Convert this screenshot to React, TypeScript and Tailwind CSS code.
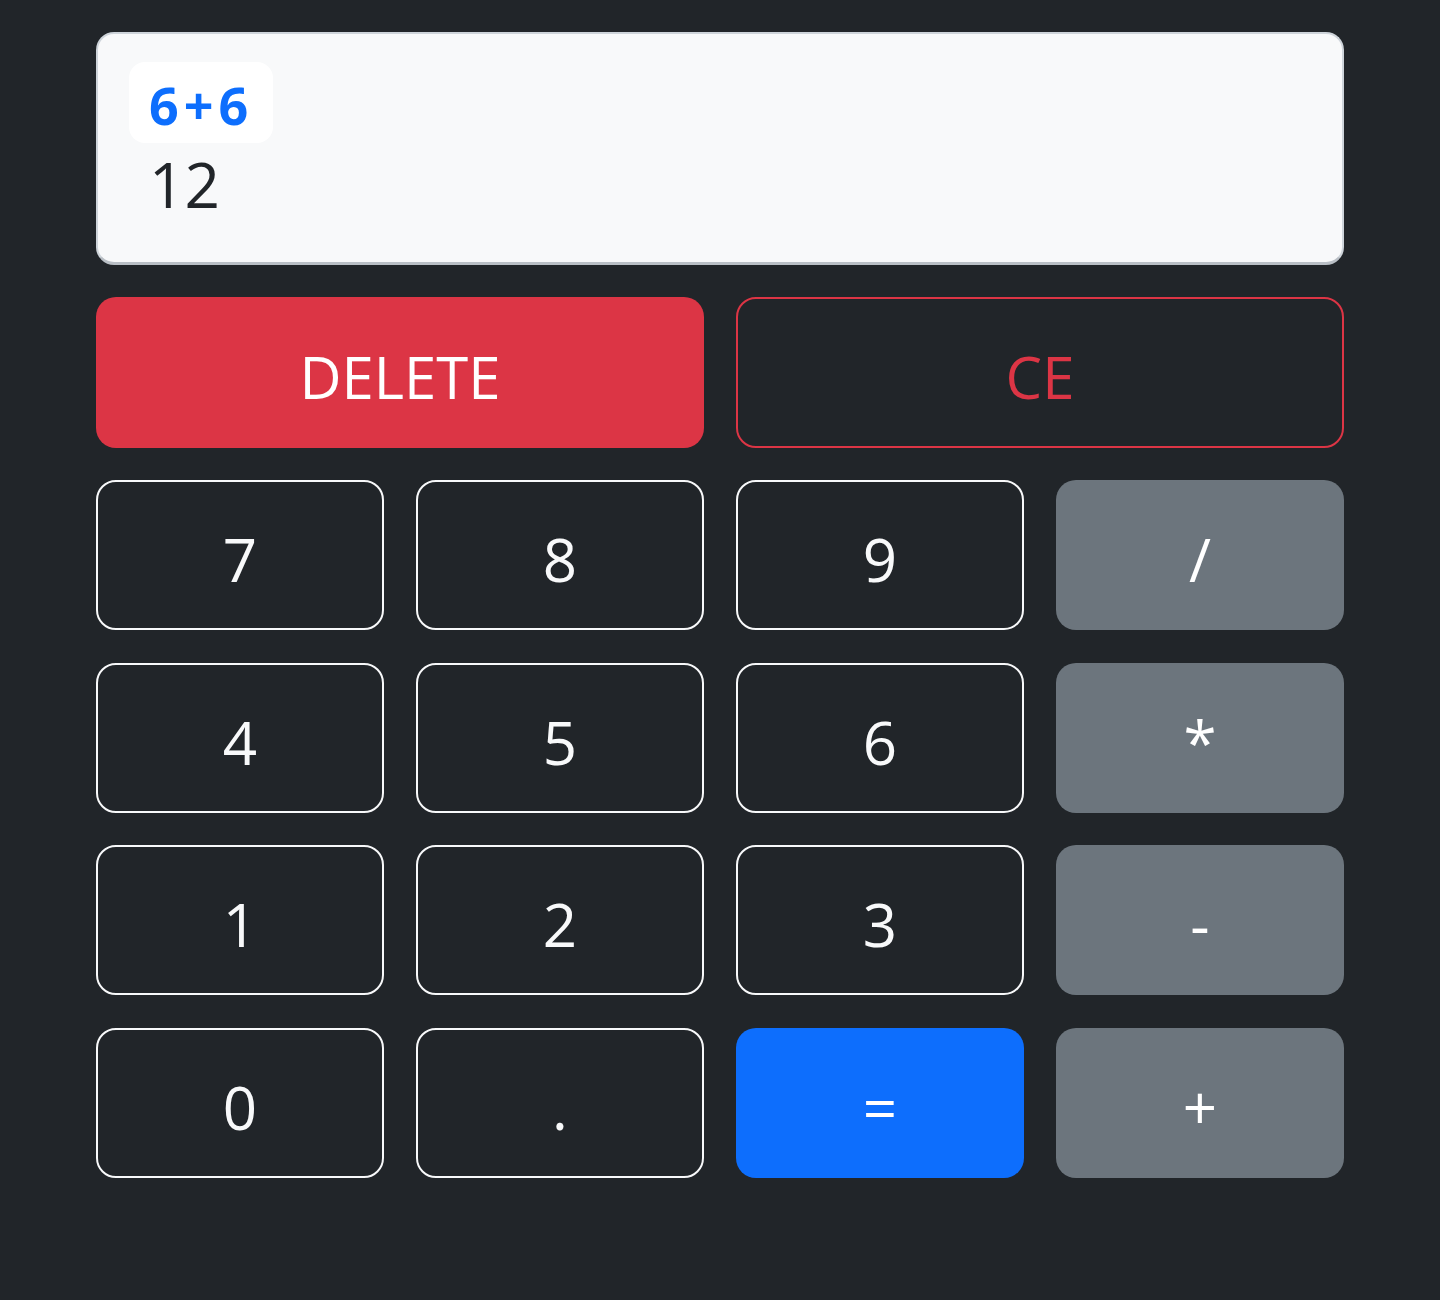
import React, { useState } from 'react';

const font = { fontFamily: '"Open Sans", "Noto Sans", "Liberation Sans", sans-serif' };

type Key = { label: string; kind: 'num' | 'op' | 'eq' };

const keys: Key[] = [
  { label: '7', kind: 'num' },
  { label: '8', kind: 'num' },
  { label: '9', kind: 'num' },
  { label: '/', kind: 'op' },
  { label: '4', kind: 'num' },
  { label: '5', kind: 'num' },
  { label: '6', kind: 'num' },
  { label: '*', kind: 'op' },
  { label: '1', kind: 'num' },
  { label: '2', kind: 'num' },
  { label: '3', kind: 'num' },
  { label: '-', kind: 'op' },
  { label: '0', kind: 'num' },
  { label: '.', kind: 'num' },
  { label: '=', kind: 'eq' },
  { label: '+', kind: 'op' },
];

const keyClass = {
  num: 'border-2 border-[#f8f9fa] bg-transparent text-[#f8f9fa]',
  op: 'bg-[#6c757d] text-white',
  eq: 'bg-[#0d6efd] text-white',
};

export default function App() {
  const [expr, setExpr] = useState('6+6');
  const [result, setResult] = useState('12');

  const press = (k: string) => {
    if (k === '=') {
      try {
        // eslint-disable-next-line no-new-func
        setResult(String(Function(`return (${expr})`)()));
      } catch {
        setResult('Error');
      }
      return;
    }
    setExpr(expr + k);
  };

  return (
    <div className="min-h-screen bg-[#212529] px-[96px] pt-8" style={font}>
      {/* 显示屏 */}
      <div className="h-[233px] rounded-[18px] border-2 border-b-[3px] border-[#ced4da] border-b-[#b9bfc5] bg-[#f8f9fa] pl-[31px] pt-[28px]">
        <div className="inline-flex h-[81px] items-center rounded-2xl bg-white pl-[20px] pr-[20px] pt-1 text-[52px] font-bold tracking-[5px] text-[#0d6efd]">
          {expr}
        </div>
        <div className="mt-[1px] pl-[20px] text-[62px] font-normal leading-[80px] text-[#212529]">
          {result}
        </div>
      </div>

      <div className="mt-8 grid h-[151px] grid-cols-2 gap-8">
        <button
          onClick={() => setExpr(expr.slice(0, -1))}
          className="rounded-[20px] bg-[#dc3545] pt-2 text-[58px] font-normal text-white"
        >
          DELETE
        </button>
        <button
          onClick={() => {
            setExpr('');
            setResult('');
          }}
          className="rounded-[20px] border-2 border-[#dc3545] pt-2 text-[58px] font-normal text-[#dc3545]"
        >
          CE
        </button>
      </div>

      <div className="mt-8 grid grid-cols-4 gap-x-8 gap-y-[32.5px]">
        {keys.map((k) => (
          <button
            key={k.label}
            onClick={() => press(k.label)}
            className={`h-[150px] rounded-[20px] pt-2 text-[60px] font-normal ${keyClass[k.kind]}`}
          >
            {k.label}
          </button>
        ))}
      </div>
    </div>
  );
}
